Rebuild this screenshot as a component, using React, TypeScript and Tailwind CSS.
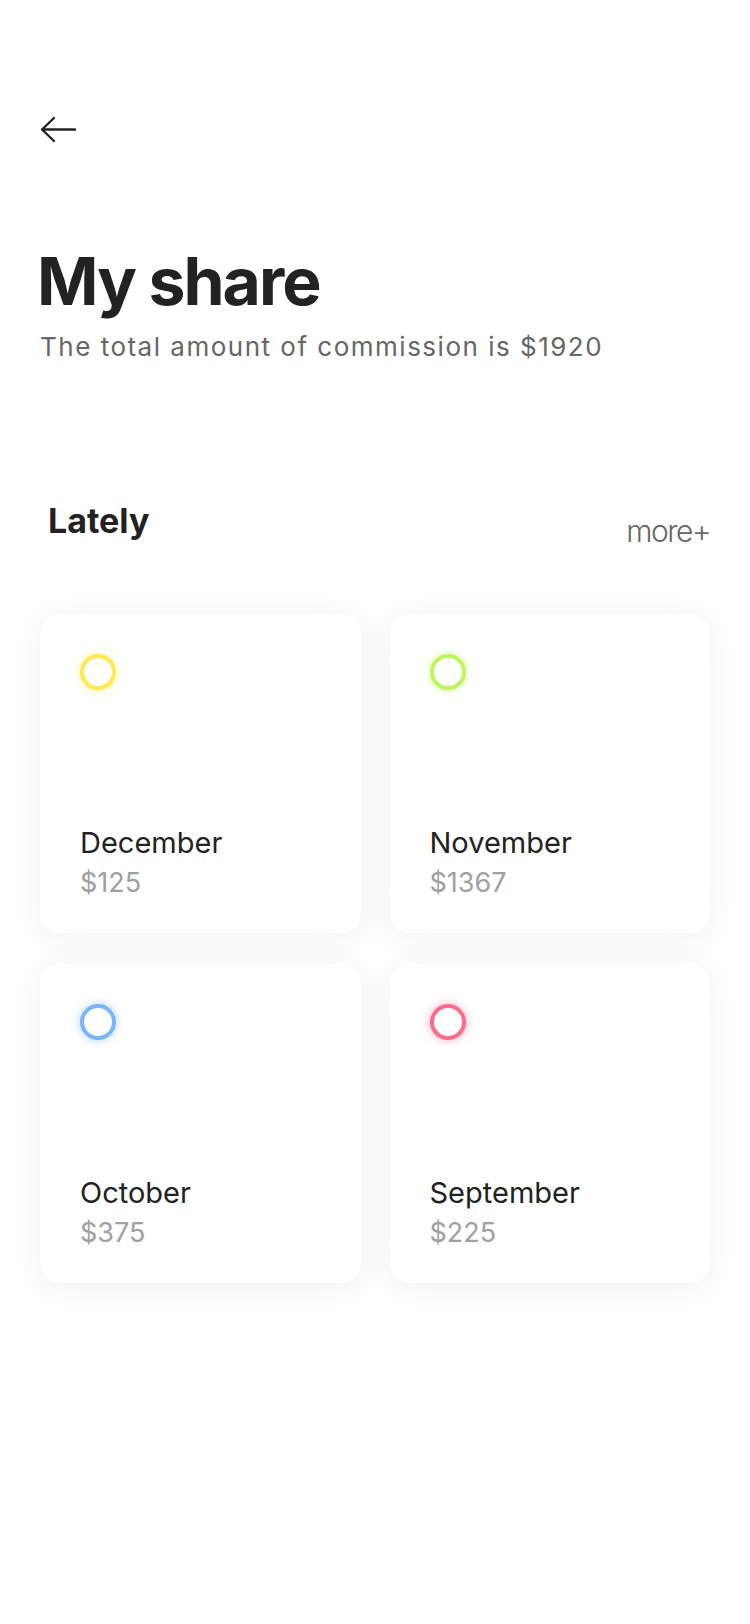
const months = [
  { name: "December", amount: "$125", ring: "border-[#ffe94f]", glow: "shadow-[0_0_10px_rgba(255,233,79,0.55)]" },
  { name: "November", amount: "$1367", ring: "border-[#bdf55c]", glow: "shadow-[0_0_10px_rgba(189,245,92,0.55)]" },
  { name: "October", amount: "$375", ring: "border-[#7ab4ff]", glow: "shadow-[0_0_10px_rgba(122,180,255,0.55)]" },
  { name: "September", amount: "$225", ring: "border-[#ff6b88]", glow: "shadow-[0_0_10px_rgba(255,107,136,0.55)]" },
];

function MonthCard({
  name,
  amount,
  ring,
  glow,
}: {
  name: string;
  amount: string;
  ring: string;
  glow: string;
}) {
  return (
    <div className="h-[319px] rounded-[20px] bg-white px-[40px] pt-[40px] shadow-[0_4px_36px_rgba(0,0,0,0.06)]">
      <div className={`w-[36px] h-[36px] rounded-full border-[4px] bg-white ${ring} ${glow}`} />
      {/* month + amount */}
      <div className="mt-[138px] text-[29px] leading-none text-[#222]">{name}</div>
      <div className="mt-[12px] text-[27px] leading-none text-[#a0a0a0]">{amount}</div>
    </div>
  );
}

export default function App() {
  return (
    <div
      className="min-h-[1624px] w-[750px] bg-white px-[40px] pt-[116px]"
      style={{ fontFamily: "Inter, 'Noto Sans', sans-serif" }}
    >
      <button className="block text-[#222]">
        <svg width="37" height="27" viewBox="0 0 37 27" fill="none">
          <path
            d="M2 13.5h33M14 2L2 13.5 14 25"
            stroke="currentColor"
            strokeWidth="2.4"
            strokeLinecap="round"
            strokeLinejoin="round"
          />
        </svg>
      </button>

      <h1 className="mt-[105px] -ml-[3px] text-[66px] leading-none font-bold tracking-[-2px] text-[#222]">
        My share
      </h1>
      <p className="mt-[20px] text-[26px] leading-none tracking-[1.5px] text-[#666]">
        The total amount of commission is $1920
      </p>

      <div className="mt-[144px] flex items-start justify-between">
        <h2 className="ml-[8px] text-[34px] leading-none font-bold text-[#222]">Lately</h2>
        <span className="mt-[12px] text-[30px] leading-none font-light tracking-[-1.5px] text-[#666]">
          more+
        </span>
      </div>

      <div className="mt-[68px] grid grid-cols-2 gap-x-[29px] gap-y-[31px]">
        {months.map((m) => (
          <MonthCard key={m.name} {...m} />
        ))}
      </div>
    </div>
  );
}
